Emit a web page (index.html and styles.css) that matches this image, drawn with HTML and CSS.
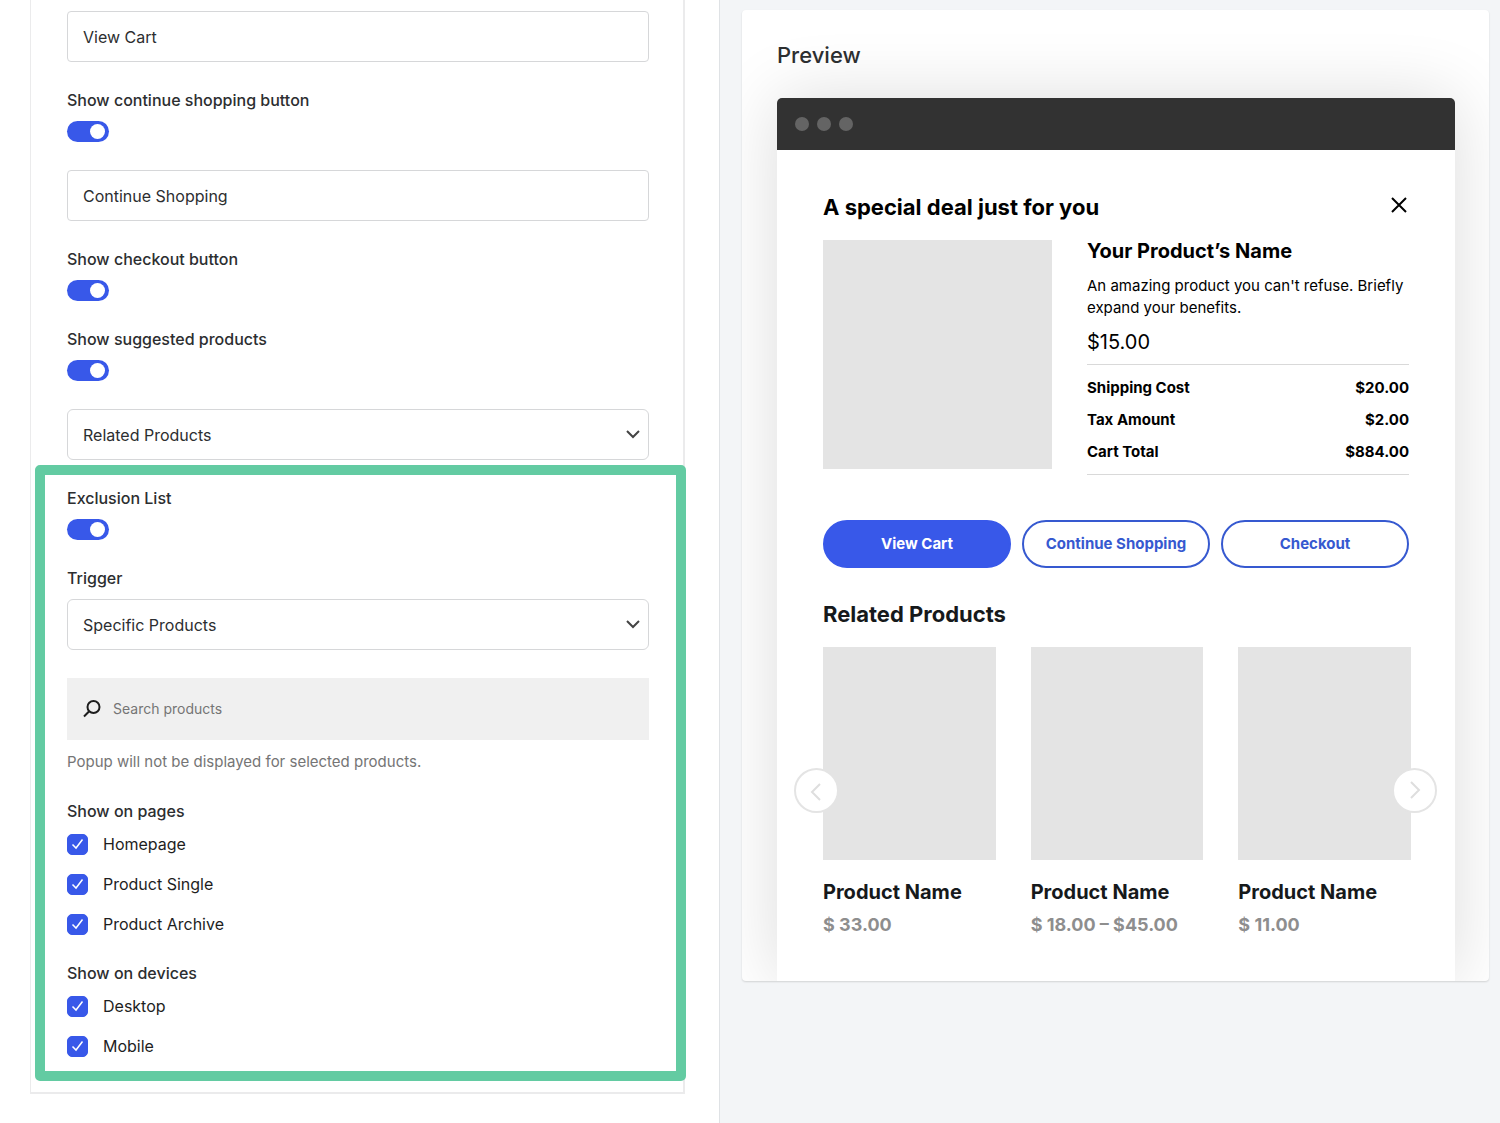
FILE: index.html
```html
<!DOCTYPE html>
<html lang="en">
<head>
<meta charset="utf-8">
<meta name="viewport" content="width=device-width, initial-scale=1">
<title>Popup settings</title>
<link rel="stylesheet" href="styles.css">
</head>
<body>
<div class="layout">
  <main class="settings">
    <form class="settings-card">
      <input class="field" type="text" value="View Cart" aria-label="View cart button text">

      <div class="option">
        <label class="label" for="show-continue">Show continue shopping button</label>
        <input class="toggle" type="checkbox" role="switch" id="show-continue" checked>
      </div>
      <input class="field" type="text" value="Continue Shopping" aria-label="Continue shopping button text">

      <div class="option">
        <label class="label" for="show-checkout">Show checkout button</label>
        <input class="toggle" type="checkbox" role="switch" id="show-checkout" checked>
      </div>

      <div class="option">
        <label class="label" for="show-suggested">Show suggested products</label>
        <input class="toggle" type="checkbox" role="switch" id="show-suggested" checked>
      </div>
      <select class="field select" aria-label="Suggested products source">
        <option>Related Products</option>
      </select>

      <section class="exclusion">
        <div class="option">
          <label class="label" for="exclusion-list">Exclusion List</label>
          <input class="toggle" type="checkbox" role="switch" id="exclusion-list" checked>
        </div>

        <div class="option">
          <label class="label" for="trigger">Trigger</label>
          <select class="field select" id="trigger">
            <option>Specific Products</option>
          </select>
        </div>

        <div class="option">
          <div class="search">
            <svg class="search-icon" viewBox="0 0 18 18" width="18" height="18" aria-hidden="true"><circle cx="10.500" cy="7" r="6"/><path d="M6.200 11.300 1 16.500"/></svg>
            <input class="search-input" type="search" placeholder="Search products" aria-label="Search products">
          </div>
          <p class="help">Popup will not be displayed for selected products.</p>
        </div>

        <fieldset class="checks">
          <legend class="label">Show on pages</legend>
          <label class="check"><input type="checkbox" checked>Homepage</label>
          <label class="check"><input type="checkbox" checked>Product Single</label>
          <label class="check"><input type="checkbox" checked>Product Archive</label>
        </fieldset>

        <fieldset class="checks">
          <legend class="label">Show on devices</legend>
          <label class="check"><input type="checkbox" checked>Desktop</label>
          <label class="check"><input type="checkbox" checked>Mobile</label>
        </fieldset>
      </section>
    </form>
  </main>

  <aside class="preview">
    <div class="preview-card">
      <h2 class="preview-title">Preview</h2>
      <div class="browser">
        <div class="browser-bar"><span></span><span></span><span></span></div>
        <div class="popup">
          <header class="popup-head">
            <h3 class="heading">A special deal just for you</h3>
            <button class="close" type="button" aria-label="Close">
              <svg viewBox="0 0 16 16" width="16" height="16" aria-hidden="true"><path d="m1 1 14 14M15 1 1 15"/></svg>
            </button>
          </header>

          <div class="offer">
            <div class="offer-image"></div>
            <div class="offer-details">
              <h4 class="offer-name">Your Product’s Name</h4>
              <p class="offer-text">An amazing product you can't refuse. Briefly expand your benefits.</p>
              <p class="offer-price">$15.00</p>
              <table class="totals">
                <tbody>
                  <tr><th scope="row">Shipping Cost</th><td>$20.00</td></tr>
                  <tr><th scope="row">Tax Amount</th><td>$2.00</td></tr>
                  <tr><th scope="row">Cart Total</th><td>$884.00</td></tr>
                </tbody>
              </table>
            </div>
          </div>

          <div class="actions">
            <button class="pill pill-primary" type="button">View Cart</button>
            <button class="pill" type="button">Continue Shopping</button>
            <button class="pill" type="button">Checkout</button>
          </div>

          <h3 class="heading related-heading">Related Products</h3>
          <div class="carousel">
            <article class="product">
              <div class="product-image"></div>
              <h4 class="product-name">Product Name</h4>
              <p class="product-price">$ 33.00</p>
            </article>
            <article class="product">
              <div class="product-image"></div>
              <h4 class="product-name">Product Name</h4>
              <p class="product-price">$ 18.00 – $45.00</p>
            </article>
            <article class="product">
              <div class="product-image"></div>
              <h4 class="product-name">Product Name</h4>
              <p class="product-price">$ 11.00</p>
            </article>
            <button class="arrow arrow-prev" type="button" aria-label="Previous products">
              <svg viewBox="0 0 20 20" width="20" height="20" aria-hidden="true"><path d="m13 3-8 8 8 8"/></svg>
            </button>
            <button class="arrow arrow-next" type="button" aria-label="Next products">
              <svg viewBox="0 0 20 20" width="20" height="20" aria-hidden="true"><path d="m6 1 8 8-8 8"/></svg>
            </button>
          </div>
        </div>
      </div>
    </div>
  </aside>
</div>
</body>
</html>
```
FILE: styles.css
```css
:root {
  --blue: #3858e9;
  --outline-blue: #3659d0;
  --green: #63cba2;
  --ink: #2c2e30;
  --tile: #e4e4e4;
}

* {
  box-sizing: border-box;
}

body {
  margin: 0;
  background: #fff;
  color: var(--ink);
  font-family: Inter, "Liberation Sans", sans-serif;
  font-size: 16px;
  line-height: 20px;
}

h2, h3, h4, p {
  margin: 0;
}

button, input, select {
  font: inherit;
  color: inherit;
}

.layout {
  display: grid;
  grid-template-columns: 48fr 52fr;
  min-height: 100vh;
}

/* Settings column */

.settings {
  padding: 0 34px 30px 30px;
  border-right: 1px solid #dfe2e5;
}

.settings-card {
  display: flex;
  flex-direction: column;
  gap: 28px;
  padding: 11px 34px 35px 36px;
  border: solid #ebebec;
  border-width: 0 2px 2px 1px;
}

.option {
  display: flex;
  flex-direction: column;
  align-items: flex-start;
  gap: 11px;
}

.label {
  padding: 0;
  font-size: 16px;
  font-weight: 500;
}

.field {
  width: 100%;
  height: 51px;
  padding: 0 15px;
  border: 1px solid #d6d7d9;
  border-radius: 4px;
  background-color: #fff;
}

.select {
  appearance: none;
  border-radius: 6px;
  background-image: url("data:image/svg+xml,%3Csvg xmlns='http://www.w3.org/2000/svg' width='14' height='9' fill='none' stroke='%23444' stroke-width='2'%3E%3Cpath d='m1 1 6 6 6-6'/%3E%3C/svg%3E");
  background-repeat: no-repeat;
  background-position: right 8px center;
}

.toggle {
  appearance: none;
  display: flex;
  align-items: center;
  width: 42px;
  height: 21px;
  margin: 0;
  padding: 0 4px;
  border-radius: 11px;
  background: #b9bdc2;
}

.toggle::before {
  content: "";
  width: 15px;
  height: 15px;
  border-radius: 50%;
  background: #fff;
}

.toggle:checked {
  justify-content: flex-end;
  background: var(--blue);
}

.exclusion {
  position: relative;
  display: flex;
  flex-direction: column;
  gap: 28px;
}

/* Green frame that calls attention to the exclusion settings */
.exclusion::after {
  content: "";
  position: absolute;
  inset: -23px -37px -24px -32px;
  border: 10px solid var(--green);
  border-radius: 5px;
  pointer-events: none;
}

.search {
  display: flex;
  align-items: center;
  gap: 12px;
  width: 100%;
  height: 62px;
  padding: 0 16px;
  background: #f0f0f0;
}

.search-icon {
  fill: none;
  stroke: #1e1e1e;
  stroke-width: 2;
}

.search-input {
  flex: 1;
  min-width: 0;
  padding: 0;
  border: 0;
  outline: 0;
  background: none;
  font-size: 14px;
}

.search-input::placeholder {
  color: #757575;
}

.help {
  color: #757575;
  font-size: 15px;
  line-height: 22px;
}

.checks {
  display: flex;
  flex-direction: column;
  gap: 18px;
  min-width: 0;
  margin: 0;
  padding: 0;
  border: 0;
}

.checks .label {
  margin-bottom: 12px;
}

.check {
  display: flex;
  align-items: center;
  gap: 15px;
  color: #1e1e1e;
  line-height: 22px;
}

.check input {
  appearance: none;
  width: 21px;
  height: 21px;
  margin: 0;
  border: 1px solid var(--blue);
  border-radius: 5px;
}

.check input:checked {
  background: var(--blue) url("data:image/svg+xml,%3Csvg xmlns='http://www.w3.org/2000/svg' width='13' height='12' fill='none' stroke='%23fff' stroke-width='1.500'%3E%3Cpath d='m1.500 6.500 3.500 3.500 6.500-8.500'/%3E%3C/svg%3E") center / 13px 12px no-repeat;
}

/* Preview column */

.preview {
  padding: 10px 11px 30px 22px;
  background: #f3f5f7;
}

.preview-card {
  padding: 33px 34px 0 35px;
  overflow: hidden;
  border-radius: 4px;
  background: #fff;
  box-shadow: 0 1px 2px rgba(0, 0, 0, 0.14);
}

.preview-title {
  margin-bottom: 31px;
  font-size: 22px;
  font-weight: 500;
  line-height: 24px;
}

.browser {
  border-radius: 5px 5px 0 0;
  background: #fff;
  box-shadow: 0 0 70px rgba(0, 0, 0, 0.14);
}

.browser-bar {
  display: flex;
  align-items: center;
  gap: 8px;
  height: 52px;
  padding: 0 18px;
  border-radius: 5px 5px 0 0;
  background: #323232;
}

.browser-bar span {
  width: 14px;
  height: 14px;
  border-radius: 50%;
  background: #646464;
}

.popup {
  padding: 45px 44px 44px 46px;
  color: #000;
}

.popup-head {
  display: flex;
  align-items: flex-start;
  justify-content: space-between;
  margin-bottom: 21px;
}

.heading {
  font-size: 22px;
  font-weight: 700;
  line-height: 24px;
}

.close {
  padding: 2px 4px;
  border: 0;
  background: none;
  line-height: 0;
}

.close svg {
  fill: none;
  stroke: #000;
  stroke-width: 2;
}

.offer {
  display: grid;
  grid-template-columns: 229fr 322fr;
  gap: 35px;
  align-items: start;
  margin-right: 2px;
}

.offer-image {
  aspect-ratio: 1;
  background: var(--tile);
}

.offer-name {
  margin-bottom: 13px;
  font-size: 20px;
  font-weight: 700;
  line-height: 22px;
}

.offer-text {
  font-size: 15px;
  line-height: 22px;
}

.offer-price {
  margin: 11px 0 10px;
  font-size: 20px;
  line-height: 24px;
}

.totals {
  width: 100%;
  border-collapse: separate;
  border-spacing: 0;
  border: solid #d9d9d9;
  border-width: 1px 0;
  padding: 7px 0 6px;
  font-size: 15px;
  font-weight: 700;
  line-height: 32px;
}

.totals th,
.totals td {
  padding: 0;
  text-align: left;
}

.totals td {
  text-align: right;
}

.actions {
  display: grid;
  grid-template-columns: repeat(3, 1fr);
  gap: 11px;
  margin: 45px 2px 34px 0;
}

.pill {
  height: 48px;
  padding: 0;
  border: 2px solid var(--outline-blue);
  border-radius: 24px;
  background: #fff;
  color: var(--outline-blue);
  font-size: 15px;
  font-weight: 700;
}

.pill-primary {
  border-color: var(--blue);
  background: var(--blue);
  color: #fff;
}

.related-heading {
  margin-bottom: 21px;
  color: #16191b;
}

.carousel {
  position: relative;
  display: grid;
  grid-template-columns: repeat(3, 1fr);
  gap: 35px;
}

.product-image {
  aspect-ratio: 173 / 213;
  margin-bottom: 20px;
  background: var(--tile);
}

.product-name {
  margin-bottom: 9px;
  color: #16191b;
  font-size: 20px;
  font-weight: 700;
  line-height: 24px;
}

.product-price {
  color: #8e8e8e;
  font-size: 18px;
  font-weight: 700;
  line-height: 24px;
}

.arrow {
  position: absolute;
  top: 121px;
  display: grid;
  place-items: center;
  width: 45px;
  height: 45px;
  padding: 0;
  border: 2px solid var(--tile);
  border-radius: 50%;
  background: #fff;
}

.arrow-prev {
  left: -29px;
}

.arrow-next {
  right: -26px;
}

.arrow svg {
  fill: none;
  stroke: #dedede;
  stroke-width: 2;
}
```
